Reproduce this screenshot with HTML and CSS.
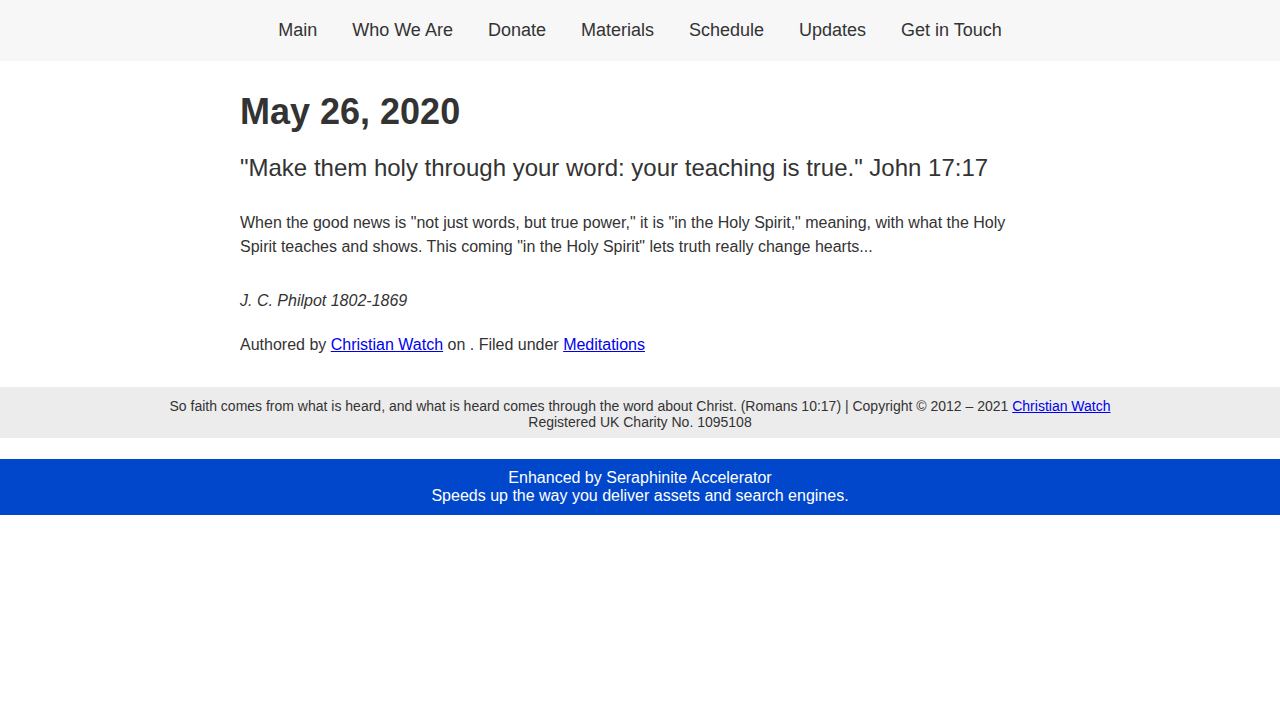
FILE: index.html
```html
<!DOCTYPE html>
<html lang="en">
<head>
<meta charset="utf-8">
<title>May 26, 2020</title>
<link rel="stylesheet" href="styles.css">
</head>
<body>
<nav class="nav">
  <a class="nav-item" href="#">Main</a>
  <a class="nav-item" href="#">Who We Are</a>
  <a class="nav-item" href="#">Donate</a>
  <a class="nav-item" href="#">Materials</a>
  <a class="nav-item" href="#">Schedule</a>
  <a class="nav-item" href="#">Updates</a>
  <a class="nav-item" href="#">Get in Touch</a>
</nav>
<main class="post">
  <h1 class="post-title">May 26, 2020</h1>
  <h2 class="post-verse">"Make them holy through your word: your teaching is true." John 17:17</h2>
  <p class="post-body">When the good news is "not just words, but true power," it is "in the Holy Spirit," meaning, with what the Holy Spirit teaches and shows. This coming "in the Holy Spirit" lets truth really change hearts...</p>
  <p class="post-author"><em>J. C. Philpot 1802-1869</em></p>
  <p class="post-meta">Authored by <a href="#">Christian Watch</a> on . Filed under <a href="#">Meditations</a></p>
</main>
<footer class="footer">
  <div>So faith comes from what is heard, and what is heard comes through the word about Christ. (Romans 10:17) | Copyright © 2012 – 2021 <a href="#">Christian Watch</a></div>
  <div>Registered UK Charity No. 1095108</div>
</footer>
<div class="promo">
  <div>Enhanced by Seraphinite Accelerator</div>
  <div>Speeds up the way you deliver assets and search engines.</div>
</div>
</body>
</html>
```
FILE: styles.css
```css
* { box-sizing: border-box; }
body {
  margin: 0;
  font-family: "Liberation Sans", Arial, sans-serif;
  color: #333;
  background: #fff;
}
a { color: #0000ee; }
.nav {
  height: 61px;
  background: #f7f7f7;
  display: flex;
  justify-content: center;
  align-items: center;
}
.nav-item {
  font-size: 18px;
  color: #333;
  text-decoration: none;
  padding: 0 17.5px;
}
.post {
  width: 800px;
  margin: 0 auto;
  padding-top: 30px;
}
.post-title {
  margin: 0;
  font-size: 36px;
  line-height: 41px;
  font-weight: bold;
}
.post-verse {
  margin: 22px 0 0;
  font-size: 24px;
  line-height: 28px;
  font-weight: normal;
}
.post-body {
  margin: 29px 0 0;
  font-size: 16px;
  line-height: 24px;
}
.post-author {
  margin: 30px 0 0;
  font-size: 16px;
  line-height: 24px;
}
.post-meta {
  margin: 20px 0 0;
  font-size: 16px;
  line-height: 24px;
}
.footer {
  margin-top: 30px;
  background: #ececec;
  text-align: center;
  font-size: 14px;
  line-height: 16px;
  padding: 11px 0 8px;
}
.promo {
  margin-top: 21px;
  background: #0047cc;
  color: #fff;
  text-align: center;
  font-size: 16px;
  line-height: 18px;
  padding: 10px 0 10px;
}
```
